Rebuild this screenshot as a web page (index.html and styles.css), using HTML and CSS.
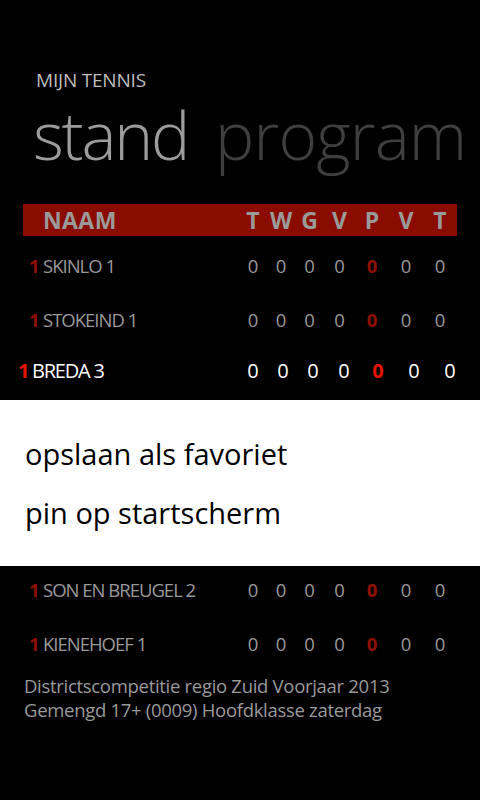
FILE: index.html
```html
<!DOCTYPE html>
<html lang="nl">
<head>
<meta charset="utf-8">
<title>Mijn Tennis - stand</title>
<link rel="stylesheet" href="styles.css">
</head>
<body>
<div class="screen">
  <div class="app-title">MIJN TENNIS</div>
  <div class="pivot">
    <span class="pivot-item active">stand</span>
    <span class="pivot-item">program</span>
  </div>

  <div class="table">
    <div class="row thead">
      <span class="hname">NAAM</span>
      <span class="c">T</span><span class="c">W</span><span class="c">G</span><span class="c">V</span><span class="c">P</span><span class="c">V</span><span class="c">T</span>
    </div>
    <div class="row">
      <span class="rank">1</span><span class="name">SKINLO 1</span>
      <span class="c">0</span><span class="c">0</span><span class="c">0</span><span class="c">0</span><span class="c pts">0</span><span class="c">0</span><span class="c">0</span>
    </div>
    <div class="row">
      <span class="rank">1</span><span class="name">STOKEIND 1</span>
      <span class="c">0</span><span class="c">0</span><span class="c">0</span><span class="c">0</span><span class="c pts">0</span><span class="c">0</span><span class="c">0</span>
    </div>
    <div class="row selected">
      <span class="rank">1</span><span class="name">BREDA 3</span>
      <span class="c">0</span><span class="c">0</span><span class="c">0</span><span class="c">0</span><span class="c pts">0</span><span class="c">0</span><span class="c">0</span>
    </div>
  </div>

  <div class="context-menu">
    <div class="menu-item">opslaan als favoriet</div>
    <div class="menu-item">pin op startscherm</div>
  </div>

  <div class="table table-after">
    <div class="row">
      <span class="rank">1</span><span class="name">SON EN BREUGEL 2</span>
      <span class="c">0</span><span class="c">0</span><span class="c">0</span><span class="c">0</span><span class="c pts">0</span><span class="c">0</span><span class="c">0</span>
    </div>
    <div class="row">
      <span class="rank">1</span><span class="name">KIENEHOEF 1</span>
      <span class="c">0</span><span class="c">0</span><span class="c">0</span><span class="c">0</span><span class="c pts">0</span><span class="c">0</span><span class="c">0</span>
    </div>
  </div>

  <div class="footer">
    <div>Districtscompetitie regio Zuid Voorjaar 2013</div>
    <div>Gemengd 17+ (0009) Hoofdklasse zaterdag</div>
  </div>
</div>
</body>
</html>
```
FILE: styles.css
```css
html, body {
  margin: 0;
  padding: 0;
  background: #000;
}
body {
  font-family: "Open Sans", "Noto Sans", sans-serif;
  color: #999;
}
.screen {
  width: 480px;
  height: 800px;
  overflow: hidden;
  background: #000;
}
.app-title {
  margin: 70px 0 0 36px;
  font-size: 19px;
  line-height: 20px;
  color: #bdbdbd;
  letter-spacing: -0.2px;
}
.pivot {
  display: flex;
  gap: 27px;
  margin: 11px 0 0 33px;
  white-space: nowrap;
  font-size: 66px;
  font-weight: 300;
  line-height: 66px;
}
.pivot-item {
  color: #3f3f3f;
  letter-spacing: -0.8px;
}
.pivot-item.active {
  color: #9c9c9c;
  letter-spacing: -2.2px;
}

.table {
  margin-left: 23px;
  width: 434px;
}
.row {
  display: grid;
  grid-template-columns: 20px 196px 28px 28px 29px 31px 34px 34px 34px;
  align-items: center;
  height: 54px;
  font-size: 18.5px;
  color: #999;
}
.thead {
  margin-top: 37px;
  margin-bottom: 2px;
  height: 32px;
  background: #8a0c00;
  font-weight: 700;
  font-size: 23px;
  color: #9a9a9a;
}
.hname {
  grid-column: 1 / 3;
  padding-left: 20px;
  letter-spacing: 0.4px;
}
.rank {
  padding-left: 6px;
  font-weight: 700;
  color: #8e1000;
}
.name {
  letter-spacing: -1px;
  white-space: nowrap;
}
.c { text-align: center; }
.row .pts {
  color: #8e1000;
  font-weight: 700;
}
.row.selected {
  margin-left: -5px;
  width: 450px;
  grid-template-columns: 14px 206px 30px 30px 30px 32px 36px 36px 36px;
  font-size: 20px;
  color: #fff;
  padding-bottom: 6px;
  height: 48px;
}
.row.selected .rank {
  padding-left: 0;
  color: #e51400;
}
.row.selected .name { letter-spacing: -1.2px; }
.row.selected .pts { color: #e51400; }

.context-menu {
  background: #fff;
  padding: 24px 0 24px 25px;
}
.menu-item {
  font-size: 29px;
  line-height: 59px;
  color: #000;
}
.table-after {
  margin-top: -4px;
}
.footer {
  margin: 4px 0 0 24px;
  font-size: 18.5px;
  line-height: 24px;
  color: #9a9a9a;
  letter-spacing: -0.3px;
}
```
